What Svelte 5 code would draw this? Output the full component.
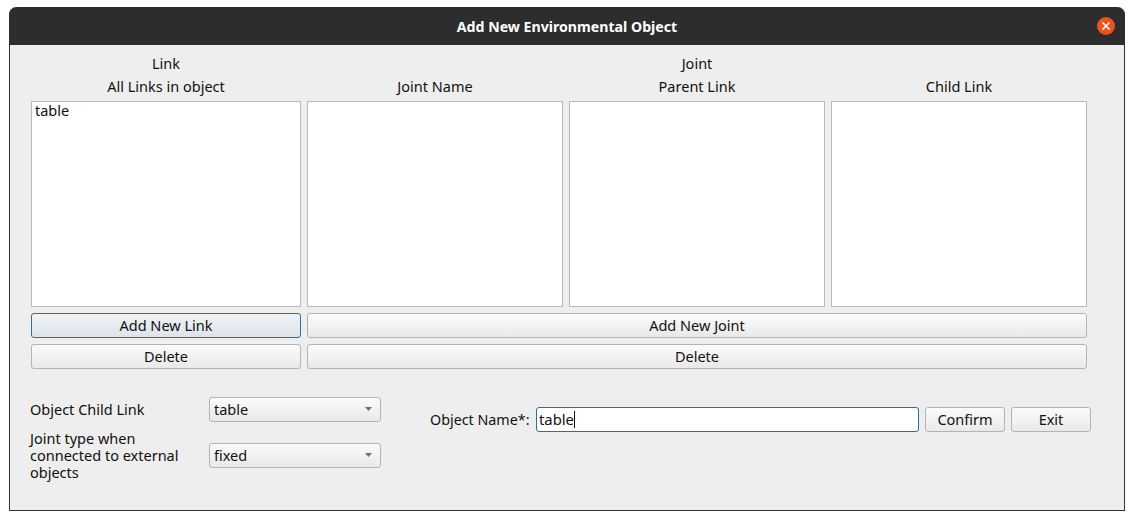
<script>
  const lists = [["table"], [], [], []];
  const heads = ["All Links in object", "Joint Name", "Parent Link", "Child Link"];
</script>

<div class="window">
  <header class="titlebar">
    <span class="title">Add New Environmental Object</span>
    <span class="close">
      <svg width="10" height="10" viewBox="0 0 10 10"><path d="M1.5 1.5l7 7M8.5 1.5l-7 7" stroke="#fff" stroke-width="1.5" fill="none" /></svg>
    </span>
  </header>

  <div class="body">
    <section class="cols caps">
      <div>Link</div>
      <div class="wide">Joint</div>
      {#each heads as h}
        <div>{h}</div>
      {/each}
    </section>

    <section class="cols panes">
      {#each lists as items}
        <div class="list">
          {#each items as it}
            <div class="item">{it}</div>
          {/each}
        </div>
      {/each}
      <button class="btn focus">Add New Link</button>
      <button class="btn wide">Add New Joint</button>
      <button class="btn">Delete</button>
      <button class="btn wide">Delete</button>
    </section>

    <section class="bottom">
      <div class="form">
        <div class="lbl">Object Child Link</div>
        <div class="combo">
          <span>table</span>
          <svg width="7" height="4" viewBox="0 0 7 4"><path d="M0 0h7L3.5 4z" fill="#6f6f6f" /></svg>
        </div>
        <div class="lbl">Joint type when connected to external objects</div>
        <div class="combo">
          <span>fixed</span>
          <svg width="7" height="4" viewBox="0 0 7 4"><path d="M0 0h7L3.5 4z" fill="#6f6f6f" /></svg>
        </div>
      </div>
      <div class="namerow">
        <span class="namelbl">Object Name*:</span>
        <div class="edit">table<span class="caret"></span></div>
        <button class="btn small">Confirm</button>
        <button class="btn small">Exit</button>
      </div>
    </section>
  </div>
</div>

<style>
  :global(body) {
    margin: 0;
    background: #fff;
  }

  .window {
    box-sizing: border-box;
    width: 1116px;
    height: 504px;
    margin: 7px 0 0 9px;
    background: #eeeeee;
    border: 1px solid #333;
    border-top: none;
    border-radius: 8px 8px 0 0;
    font-family: "Noto Sans", sans-serif;
    font-size: 14.5px;
    color: #111;
  }

  .titlebar {
    height: 38px;
    margin: 0 -1px;
    background: #2d2d2d;
    border-radius: 8px 8px 0 0;
    display: flex;
    align-items: center;
    justify-content: center;
    position: relative;
  }

  .title {
    color: #fff;
    font-weight: 700;
    font-size: 14.15px;
  }

  .close {
    position: absolute;
    right: 10px;
    top: 10px;
    width: 18px;
    height: 18px;
    border-radius: 50%;
    background: #e95420;
    display: flex;
    align-items: center;
    justify-content: center;
  }

  .cols {
    display: grid;
    grid-template-columns: 270px 256px 256px 256px;
    column-gap: 6px;
    padding-left: 21px;
  }

  .caps {
    grid-template-rows: 23px 23px;
    padding-top: 7px;
    padding-bottom: 3px;
    text-align: center;
    line-height: 23px;
  }

  .panes {
    grid-template-rows: 206px 25px 25px;
    row-gap: 6px;
  }

  .wide {
    grid-column: span 3;
  }

  .list {
    box-sizing: border-box;
    background: #fff;
    border: 1px solid #b9b9b9;
    padding: 0 3px;
  }

  .item {
    line-height: 16px;
  }

  .btn {
    box-sizing: border-box;
    font: inherit;
    color: inherit;
    padding: 0 0 2px;
    border: 1px solid #b4b4b4;
    border-radius: 3px;
    background: linear-gradient(#fbfbfb, #e9e9e9);
  }

  .btn.focus {
    border-color: #2a6f9e;
    background: linear-gradient(#f1f4f7, #dce3ea);
  }

  .bottom {
    display: flex;
    align-items: flex-start;
    padding: 28px 0 0 20px;
  }

  .form {
    display: grid;
    grid-template-columns: 179px 172px;
    row-gap: 8px;
    align-items: center;
  }

  .lbl {
    line-height: 17px;
    width: 165px;
  }

  .combo {
    box-sizing: border-box;
    height: 25px;
    padding: 0 8px 2px 4px;
    border: 1px solid #b4b4b4;
    border-radius: 3px;
    background: linear-gradient(#fbfbfb, #e9e9e9);
    display: flex;
    align-items: center;
    justify-content: space-between;
  }

  .namerow {
    display: flex;
    align-items: center;
    gap: 6px;
    margin: 10px 0 0 49px;
  }

  .namelbl {
    width: 100px;
    padding-bottom: 1px;
    font-size: 14.3px;
    white-space: nowrap;
  }

  .edit {
    box-sizing: border-box;
    width: 383px;
    height: 25px;
    padding: 0 2px;
    font-size: 14.8px;
    line-height: 23px;
    background: #fff;
    border: 1px solid #2a6f9e;
    border-radius: 3px;
    display: flex;
  }

  .caret {
    width: 1px;
    height: 17px;
    margin-top: 3px;
    background: #111;
  }

  .small {
    width: 80px;
    height: 25px;
  }
</style>
